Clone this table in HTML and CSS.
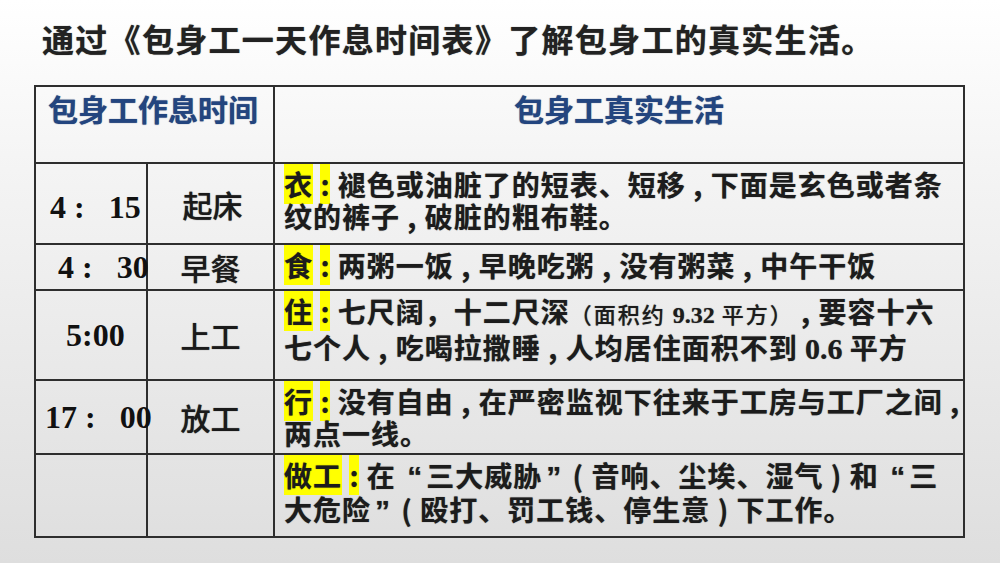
FILE: index.html
```html
<!DOCTYPE html>
<html lang="zh-CN">
<head>
<meta charset="utf-8">
<title>包身工一天作息时间表</title>
<link rel="stylesheet" href="styles.css">
</head>
<body>
<div class="slide">
  <h1 class="title">通过《包身工一天作息时间表》了解包身工的真实生活。</h1>
  <div class="table-wrap">
    <table class="schedule">
      <colgroup>
        <col class="c-time">
        <col class="c-act">
        <col class="c-life">
      </colgroup>
      <tr class="r-head">
        <th colspan="2" class="h-left">包身工作息时间</th>
        <th class="h-right">包身工真实生活</th>
      </tr>
      <tr class="r1">
        <td class="time p1">4 :&nbsp;&nbsp;&nbsp;15</td>
        <td class="act">起床</td>
        <td class="life"><mark>衣</mark> <mark>:</mark> 褪色或油脏了的短表、短移 , 下面是玄色或者条<br>纹的裤子 , 破脏的粗布鞋。</td>
      </tr>
      <tr class="r2">
        <td class="time p2">4 :&nbsp;&nbsp;&nbsp;30</td>
        <td class="act">早餐</td>
        <td class="life"><mark>食</mark> <mark>:</mark> 两粥一饭 , 早晚吃粥 , 没有粥菜 , 中午干饭</td>
      </tr>
      <tr class="r3">
        <td class="time p3">5:00</td>
        <td class="act">上工</td>
        <td class="life"><mark>住</mark> <mark>:</mark> 七尺阔，十二尺深<span class="small">（面积约 <span class="num">9.32</span> 平方）</span> , 要容十六<br>七个人 , 吃喝拉撒睡 , 人均居住面积不到 <span class="num">0.6</span> 平方</td>
      </tr>
      <tr class="r4">
        <td class="time p4">17 :&nbsp;&nbsp;&nbsp;00</td>
        <td class="act">放工</td>
        <td class="life"><mark>行</mark> <mark>:</mark> 没有自由 , 在严密监视下往来于工房与工厂之间 ,<br>两点一线。</td>
      </tr>
      <tr class="r5">
        <td class="time"></td>
        <td class="act"></td>
        <td class="life"><mark>做工</mark> <mark>:</mark> 在 <span class="q">“</span>三大威胁<span class="q">”</span> ( 音响、尘埃、湿气 ) 和 <span class="q">“</span>三<br>大危险<span class="q">”</span> ( 殴打、罚工钱、停生意 ) 下工作。</td>
      </tr>
    </table>
  </div>
</div>
</body>
</html>
```
FILE: styles.css
```css
html, body {
  margin: 0;
  padding: 0;
}

body {
  width: 1000px;
  height: 563px;
  overflow: hidden;
  background: linear-gradient(to bottom, #ffffff 0%, #f4f4f4 30%, #dedede 100%);
  font-family: "Noto Sans CJK SC", "Noto Sans", sans-serif;
  color: #1c1c1c;
}

.slide {
  display: flex;
  flex-direction: column;
}

.title {
  margin: 0;
  padding: 18px 0 0 42px;
  height: 41px;
  line-height: 40px;
  font-size: 32px;
  font-weight: 700;
  letter-spacing: 1.3px;
  color: #222;
  text-shadow: 0 0 1px rgba(0, 0, 0, 0.6);
}

.table-wrap {
  padding: 26px 0 0 34px;
}

.schedule {
  border-collapse: separate;
  border-spacing: 0;
  table-layout: fixed;
  width: 931px;
  border-top: 2px solid #2e2e2e;
  border-left: 2px solid #2e2e2e;
}

.c-time { width: 112px; }
.c-act { width: 127px; }
.c-life { width: 690px; }

.schedule th,
.schedule td {
  border-right: 2px solid #2e2e2e;
  border-bottom: 2px solid #2e2e2e;
  padding: 0;
  box-sizing: border-box;
}

.r-head { height: 77px; }
.r1 { height: 81px; }
.r2 { height: 46px; }
.r3 { height: 90px; }
.r4 { height: 74px; }
.r5 { height: 83px; }

.schedule th {
  vertical-align: top;
  font-size: 30px;
  line-height: 40px;
  font-weight: 700;
  color: #23457f;
  text-shadow: 0 0 1px rgba(20, 40, 90, 0.8);
  padding-top: 1px;
}

.h-left {
  text-align: left;
  padding-left: 12px !important;
}

.h-right {
  text-align: center;
}

.time {
  font-family: "Liberation Serif", "Times New Roman", serif;
  font-weight: 700;
  font-size: 32px;
  white-space: nowrap;
  text-align: left;
  vertical-align: middle;
  overflow: visible;
  color: #111;
}

.p1 { padding-left: 14px !important; padding-top: 8px !important; }
.p2 { padding-left: 22px !important; }
.p3 { padding-left: 30px !important; }
.p4 { padding-left: 9px !important; }

.act {
  text-align: center;
  vertical-align: middle;
  font-size: 30px;
  font-weight: 500;
  color: #1a1a1a;
  text-shadow: 0 0 1px rgba(0, 0, 0, 0.7);
}

.r1 .act { padding-left: 4px; }

.life {
  vertical-align: top;
  padding: 4px 6px 0 9px !important;
  font-size: 28px;
  line-height: 32px;
  font-weight: 700;
  letter-spacing: 1px;
  white-space: nowrap;
  color: #1c1c1c;
  text-shadow: 0 0 1px rgba(0, 0, 0, 0.55);
}

.life mark {
  background: #ffff00;
  color: #1c1c1c;
}

.small {
  font-size: 22px;
  font-weight: 500;
  letter-spacing: 2px;
}

.num {
  font-family: "Liberation Serif", "Times New Roman", serif;
  font-weight: 700;
  letter-spacing: 0;
}

.small .num {
  font-size: 24px;
}

.life > .num {
  font-size: 30px;
}

.q {
  font-family: "Liberation Sans", Arial, sans-serif;
  font-size: 30px;
  letter-spacing: 0;
  padding: 0 4px;
}
```
